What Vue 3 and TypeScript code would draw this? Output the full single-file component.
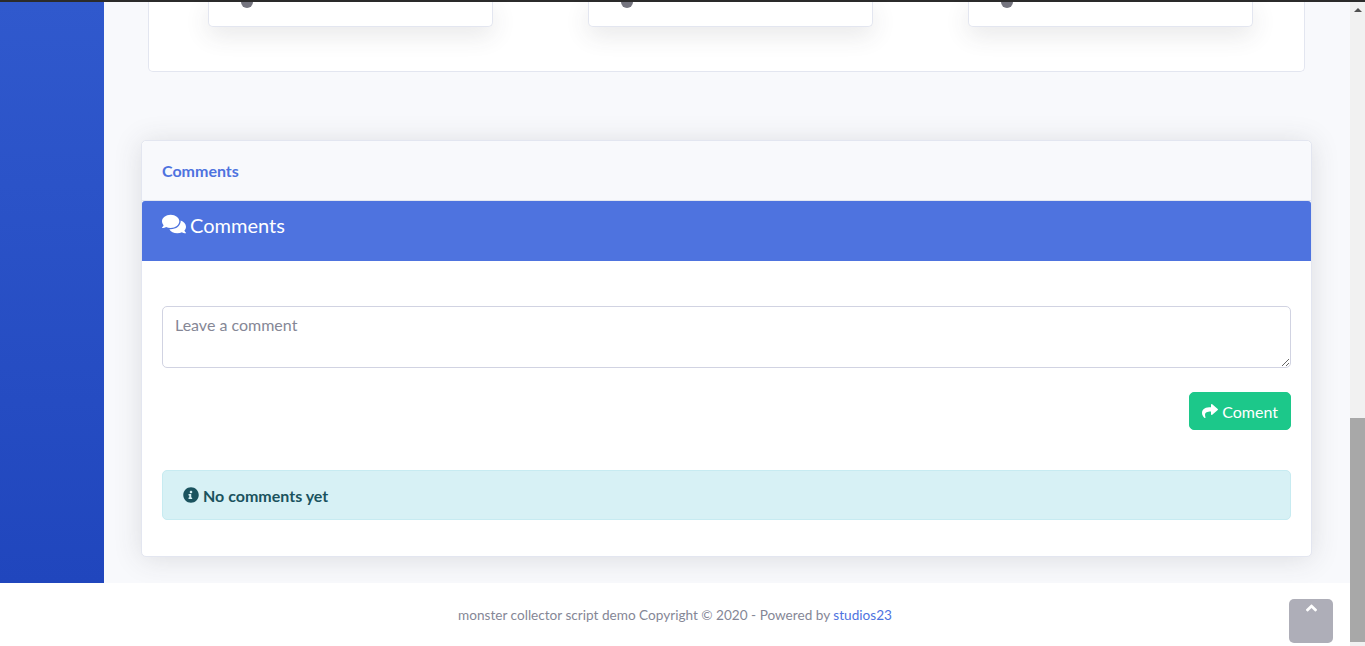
<template>
  <div class="page">
    <div class="top-strip"></div>
    <div class="shell">
      <div class="content">
        <div class="content-row">
          <aside class="sidebar"></aside>
          <main class="main">
            <section class="panel">
              <div v-for="n in 3" :key="n" class="mini-card">
                <span class="mini-dot"></span>
              </div>
            </section>

            <section class="card">
              <div class="card-head">Comments</div>
              <div class="comments-title">
                <svg class="title-icon" viewBox="0 0 576 512" aria-hidden="true">
                  <path d="M416 192c0-88.4-93.1-160-208-160S0 103.6 0 192c0 34.3 14.1 65.9 38 92-13.4 30.2-35.5 54.2-35.8 54.5-2.2 2.3-2.8 5.7-1.5 8.7S4.8 352 8 352c36.6 0 66.9-12.3 88.7-25 32.2 15.7 70.3 25 111.3 25 114.9 0 208-71.6 208-160zm122 220c23.9-26 38-57.7 38-92 0-66.9-53.5-124.2-129.3-148.1.9 6.6 1.3 13.3 1.3 20.1 0 105.9-107.7 192-240 192-10.8 0-21.3-.8-31.7-1.9C207.8 439.6 281.8 480 368 480c41 0 79.1-9.2 111.3-25 21.8 12.7 52.1 25 88.7 25 3.2 0 6.1-1.9 7.3-4.8 1.3-2.9.7-6.3-1.5-8.7-.3-.3-22.4-24.2-35.8-54.5z" />
                </svg>
                <span>Comments</span>
              </div>
              <div class="card-body">
                <textarea class="comment-input" placeholder="Leave a comment"></textarea>
                <div class="actions">
                  <button class="comment-btn" type="button">
                    <svg class="btn-icon" viewBox="0 0 512 512" aria-hidden="true">
                      <path d="M503.691 189.836L327.687 37.851C312.281 24.546 288 35.347 288 56.015v80.053C127.371 137.907 0 170.1 0 322.326c0 61.441 39.581 122.309 83.333 154.132 13.653 9.931 33.111-2.533 28.077-18.631C66.066 312.814 132.917 274.316 288 272.085V360c0 20.7 24.3 31.453 39.687 18.164l176.004-152c11.071-9.562 11.086-26.753 0-36.328z" />
                    </svg>
                    Coment
                  </button>
                </div>
                <div class="alert">
                  <svg class="alert-icon" viewBox="0 0 512 512" aria-hidden="true">
                    <path d="M256 8C119.043 8 8 119.083 8 256c0 136.997 111.043 248 248 248s248-111.003 248-248C504 119.083 392.957 8 256 8zm0 110c23.196 0 42 18.804 42 42s-18.804 42-42 42-42-18.804-42-42 18.804-42 42-42zm56 254c0 6.627-5.373 12-12 12h-112c-6.627 0-12-5.373-12-12v-24c0-6.627 5.373-12 12-12h12v-64h-12c-6.627 0-12-5.373-12-12v-24c0-6.627 5.373-12 12-12h64c6.627 0 12 5.373 12 12v100h12c6.627 0 12 5.373 12 12v24z" />
                  </svg>
                  <b>No comments yet</b>
                </div>
              </div>
            </section>
          </main>
        </div>
        <footer class="footer">
          <span>monster collector script demo Copyright © 2020 - Powered by <a href="#" class="footer-link">studios23</a></span>
        </footer>
      </div>
      <div class="scrollbar">
        <span class="scroll-arrow"></span>
        <span class="scroll-thumb"></span>
      </div>
    </div>
    <a href="#" class="to-top" aria-label="Back to top">
      <svg viewBox="0 0 320 512" aria-hidden="true">
        <path d="M177 159.7l136 136c9.4 9.4 9.4 24.6 0 33.9l-22.6 22.6c-9.4 9.4-24.6 9.4-33.9 0L160 255.9l-96.4 96.4c-9.4 9.4-24.6 9.4-33.9 0L7 329.7c-9.5-9.4-9.5-24.6-.1-34l136-136c9.4-9.5 24.6-9.5 34-.1z" />
      </svg>
    </a>
  </div>
</template>

<script setup lang="ts">
</script>

<style>
html,
body {
  margin: 0;
  overflow: hidden;
}
</style>

<style scoped>
.page {
  position: relative;
  height: 646px;
  display: flex;
  flex-direction: column;
  overflow: hidden;
  background: #f8f9fc;
  font-family: "Lato", "Noto Sans", sans-serif;
  color: #858796;
}

.top-strip {
  height: 2px;
  flex-shrink: 0;
  background: #2b2b2b;
}

.shell {
  flex: 1;
  min-height: 0;
  display: flex;
}

.content {
  flex: 1;
  min-width: 0;
  display: flex;
  flex-direction: column;
}

.content-row {
  height: 581px;
  flex-shrink: 0;
  display: flex;
}

.sidebar {
  width: 104px;
  flex-shrink: 0;
  background: linear-gradient(180deg, #3059cd 0%, #2046bd 100%);
}

.main {
  flex: 1;
  min-width: 0;
  padding: 0 38px 0 37px;
  box-sizing: border-box;
}

.panel {
  height: 70px;
  margin: 0 7px;
  box-sizing: border-box;
  padding-left: 59px;
  display: flex;
  gap: 95px;
  align-items: flex-start;
  background: #fff;
  border: 1px solid #e3e6f0;
  border-top: 0;
  border-radius: 0 0 5px 5px;
}

.mini-card {
  width: 285px;
  height: 25px;
  box-sizing: border-box;
  padding-left: 32px;
  overflow: hidden;
  background: #fff;
  border: 1px solid #e3e6f0;
  border-top: 0;
  border-radius: 0 0 5px 5px;
  box-shadow: 0 8px 24px rgba(58, 59, 69, 0.12);
}

.mini-dot {
  display: block;
  width: 12px;
  height: 12px;
  margin-top: -6px;
  border-radius: 50%;
  background: #74747e;
}

.card {
  margin-top: 68px;
  background: #fff;
  border: 1px solid #e3e6f0;
  border-radius: 5px;
  box-shadow: 0 2px 28px rgba(58, 59, 69, 0.15);
}

.card-head {
  height: 60px;
  box-sizing: border-box;
  padding: 0 20px;
  display: flex;
  align-items: center;
  background: #f8f9fc;
  border-bottom: 1px solid #e3e6f0;
  border-radius: 5px 5px 0 0;
  font-size: 16px;
  font-weight: 700;
  color: #4e73df;
}

.comments-title {
  height: 60px;
  box-sizing: border-box;
  padding: 12px 20px 0;
  display: flex;
  align-items: flex-start;
  gap: 4px;
  background: #4e73df;
  border-radius: 3px 3px 0 0;
  font-size: 20px;
  line-height: 24px;
  color: #fff;
}

.title-icon {
  width: 24px;
  height: 22px;
  fill: #fff;
}

.card-body {
  padding: 45px 20px 36px;
}

.comment-input {
  display: block;
  width: 100%;
  height: 62px;
  box-sizing: border-box;
  padding: 6px 12px;
  border: 1px solid #d1d3e2;
  border-radius: 5px;
  background: #fff;
  font: inherit;
  font-size: 16px;
  line-height: 24px;
  color: #6e707e;
  outline: none;
}

.comment-input::placeholder {
  color: #858796;
  opacity: 1;
}

.actions {
  margin-top: 24px;
  display: flex;
  justify-content: flex-end;
}

.comment-btn {
  height: 38px;
  padding: 0 12px;
  display: flex;
  align-items: center;
  gap: 4px;
  border: 1px solid #1cc88a;
  border-radius: 5px;
  background: #1cc88a;
  font: inherit;
  font-size: 16px;
  color: #fff;
}

.btn-icon {
  width: 16px;
  height: 16px;
  fill: #fff;
}

.alert {
  margin-top: 40px;
  height: 50px;
  box-sizing: border-box;
  padding: 0 20px;
  display: flex;
  align-items: center;
  gap: 4px;
  background: #d7f1f5;
  border: 1px solid #c7ebf1;
  border-radius: 5px;
  font-size: 16px;
  color: #1a535e;
}

.alert-icon {
  width: 16px;
  height: 16px;
  fill: #1a535e;
}

.footer {
  flex: 1;
  display: flex;
  align-items: center;
  justify-content: center;
  background: #fff;
  font-size: 13.6px;
  color: #858796;
}

.footer-link {
  color: #4e73df;
  text-decoration: none;
}

.scrollbar {
  width: 15px;
  flex-shrink: 0;
  position: relative;
  background: #f1f1f1;
}

.scroll-arrow {
  position: absolute;
  top: 6px;
  left: 4px;
  border-left: 4px solid transparent;
  border-right: 4px solid transparent;
  border-bottom: 4px solid #505050;
}

.scroll-thumb {
  position: absolute;
  top: 416px;
  left: 0;
  right: 0;
  height: 224px;
  background: #a8a8a8;
}

.to-top {
  position: absolute;
  left: 1289px;
  top: 599px;
  width: 44px;
  height: 44px;
  display: flex;
  justify-content: center;
  align-items: flex-start;
  border-radius: 5px;
  background: #aeaeb8;
}

.to-top svg {
  width: 11px;
  height: 18px;
  fill: #fff;
  margin-top: 0;
}
</style>
